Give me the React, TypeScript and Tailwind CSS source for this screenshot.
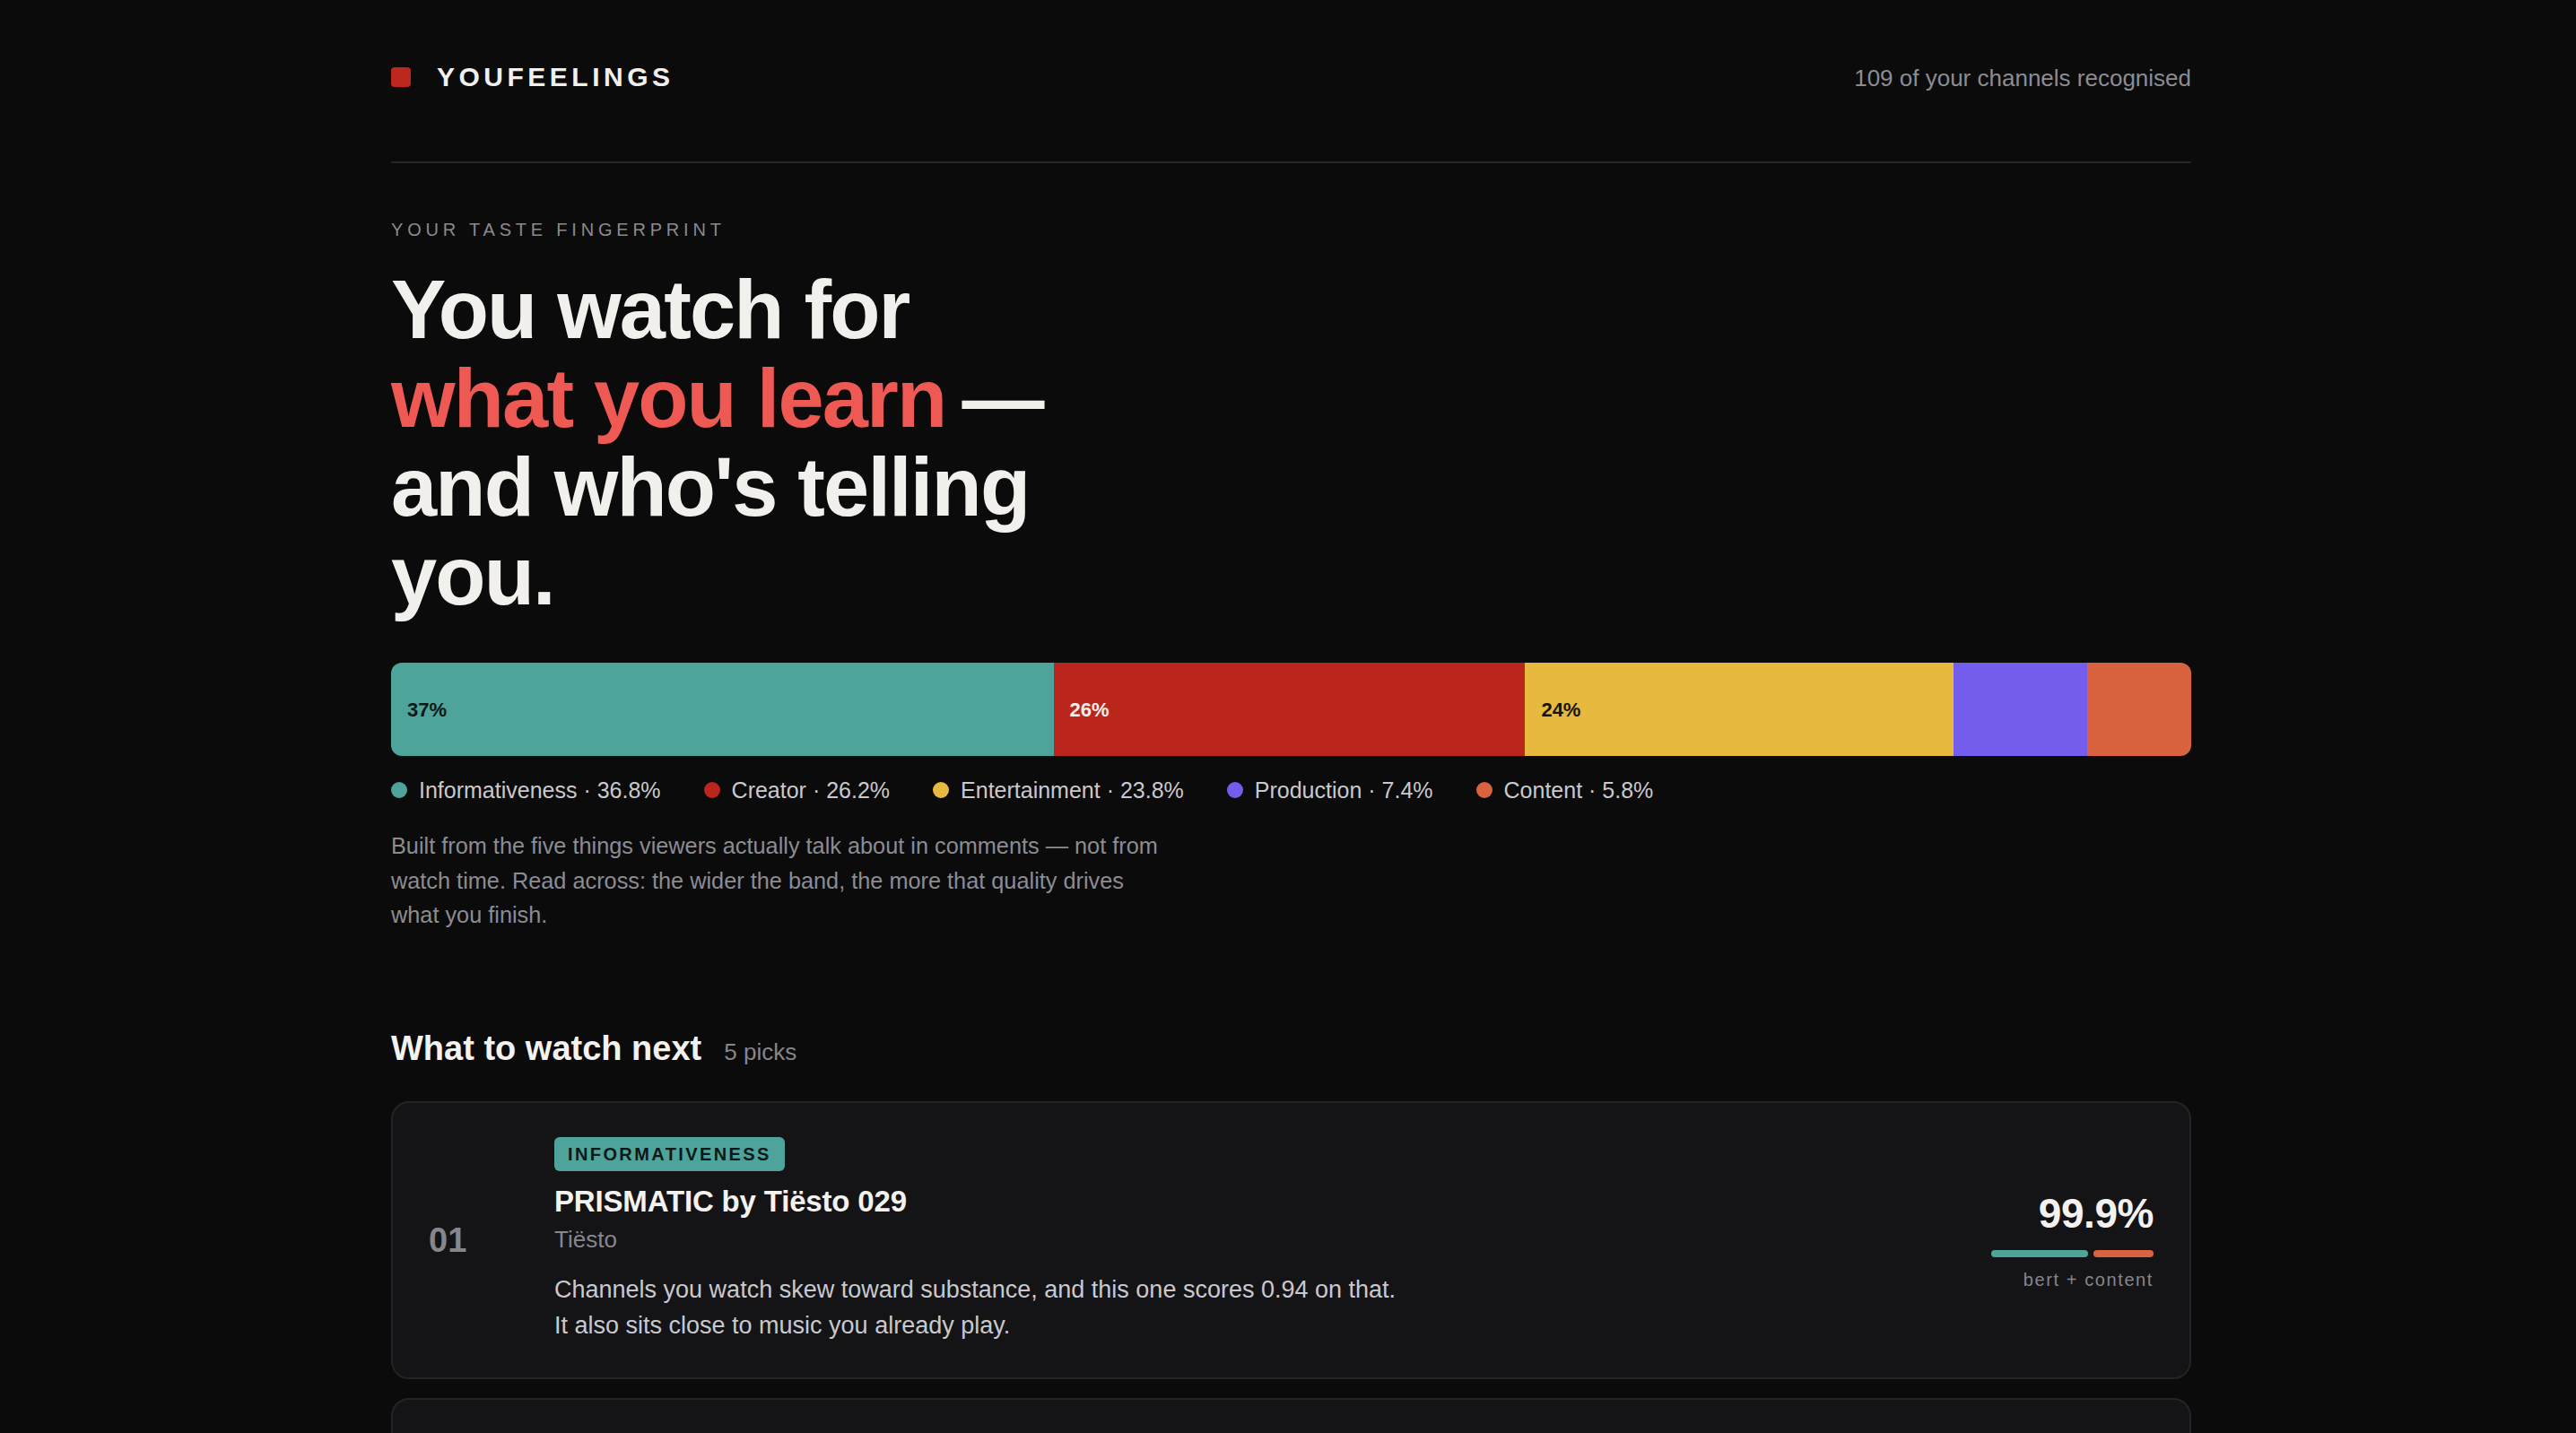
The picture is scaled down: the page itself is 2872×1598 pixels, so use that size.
import React from "react";

const segs = [
  { label: "37%", w: 36.8, bg: "bg-[#4ea39a]", fg: "text-[#0c1917]" },
  { label: "26%", w: 26.2, bg: "bg-[#bb261c]", fg: "text-[#f6efe9]" },
  { label: "24%", w: 23.8, bg: "bg-[#e8b93f]", fg: "text-[#1a1405]" },
  { label: "", w: 7.4, bg: "bg-[#745ded]", fg: "" },
  { label: "", w: 5.8, bg: "bg-[#d9633f]", fg: "" },
];

const legend = [
  { name: "Informativeness", v: "36.8%", dot: "bg-[#4ea39a]" },
  { name: "Creator", v: "26.2%", dot: "bg-[#bb261c]" },
  { name: "Entertainment", v: "23.8%", dot: "bg-[#e8b93f]" },
  { name: "Production", v: "7.4%", dot: "bg-[#745ded]" },
  { name: "Content", v: "5.8%", dot: "bg-[#d9633f]" },
];

type Pick = {
  n: string;
  tag: string;
  tagBg: string;
  title: string;
  artist: string;
  lines: string[];
  score: string;
  bars: { w: number; c: string }[];
  method: string;
};

const picks: Pick[] = [
  {
    n: "01",
    tag: "INFORMATIVENESS",
    tagBg: "bg-[#4ea39a]",
    title: "PRISMATIC by Tiësto 029",
    artist: "Tiësto",
    lines: [
      "Channels you watch skew toward substance, and this one scores 0.94 on that.",
      "It also sits close to music you already play.",
    ],
    score: "99.9%",
    bars: [
      { w: 108, c: "bg-[#4ea39a]" },
      { w: 67, c: "bg-[#d9633f]" },
    ],
    method: "bert + content",
  },
  {
    n: "02",
    tag: "CREATOR",
    tagBg: "bg-[#bb261c]",
    title: "Studio session, live from the booth",
    artist: "Tiësto",
    lines: [
      "You stay with creators who talk straight to camera, and this one scores 0.91 on that.",
      "It also sits close to music you already play.",
    ],
    score: "98.7%",
    bars: [
      { w: 108, c: "bg-[#bb261c]" },
      { w: 67, c: "bg-[#d9633f]" },
    ],
    method: "bert + content",
  },
];

function PickCard({ p }: { p: Pick }) {
  return (
    <div className="flex items-center rounded-[20px] border-2 border-[#242427] bg-[#141417] px-[40px] py-[38px]">
      <div className="w-[140px] shrink-0 text-[38px] font-bold leading-[48px] text-[#86868c]">
        {p.n}
      </div>
      <div className="flex min-w-0 flex-1 flex-col items-start">
        <span
          className={`${p.tagBg} rounded-[6px] px-[15px] text-[20px] font-bold leading-[38px] tracking-[0.12em] text-[#0c1917]`}
        >
          {p.tag}
        </span>
        <div className="mt-[14px] text-[33px] font-bold leading-[40px] tracking-[-0.005em] text-[#f4f2ee]">
          {p.title}
        </div>
        <div className="mt-[5px] text-[26px] leading-[34px] text-[#86868c]">{p.artist}</div>
        <div className="mt-[19px] text-[27px] leading-[40px] text-[#c9c9cd]">
          {p.lines.map((l, i) => (
            <div key={i} className="whitespace-nowrap">
              {l}
            </div>
          ))}
        </div>
      </div>
      <div className="flex shrink-0 flex-col items-end">
        <div className="text-[46px] font-bold leading-[52px] tracking-[-0.01em] text-[#f4f2ee]">
          {p.score}
        </div>
        <div className="mt-[15px] flex gap-[6px]">
          {p.bars.map((b, i) => (
            <div key={i} className={`${b.c} h-[8px] rounded-full`} style={{ width: b.w }} />
          ))}
        </div>
        <div className="mt-[13px] text-[20px] leading-[24px] tracking-[0.08em] text-[#86868c]">
          {p.method}
        </div>
      </div>
    </div>
  );
}

export default function App() {
  return (
    <div className="min-h-screen bg-[#0b0b0b] font-['Liberation_Sans',Arial,Helvetica,sans-serif] text-[#f4f2ee]">
      <div className="ml-[436px] w-[2007px] pb-[80px]">
        {/* header */}
        <header className="flex items-center justify-between border-b-2 border-[#262628] pt-[56px] pb-[64px]">
          <div className="flex h-[60px] items-center gap-[29px]">
            <div className="h-[22px] w-[22px] rounded-[4px] bg-[#bd281e]" />
            <span className="text-[30px] font-bold leading-[36px] tracking-[0.15em] text-[#f2f0ec]">
              YOUFEELINGS
            </span>
          </div>
          <div className="pt-[2px] text-[26px] leading-[36px] text-[#8c8c92]">
            109 of your channels recognised
          </div>
        </header>

        {/* fingerprint */}
        <section className="pt-[60px]">
          <div className="text-[20px] leading-[28px] tracking-[0.24em] text-[#8a8a90]">
            YOUR TASTE FINGERPRINT
          </div>
          <h1 className="mt-[26px] text-[92px] font-bold leading-[99px] tracking-[-0.02em] text-[#f2f0ec]">
            <span className="block whitespace-nowrap">You watch for</span>
            <span className="block whitespace-nowrap">
              <span className="text-[#ee5a53]">what you learn</span>
              <span className="ml-[18px]">—</span>
            </span>
            <span className="block whitespace-nowrap">and who's telling</span>
            <span className="block whitespace-nowrap">you.</span>
          </h1>

          <div className="mt-[47px] flex h-[104px] overflow-hidden rounded-[12px]">
            {segs.map((s, i) => (
              <div
                key={i}
                className={`${s.bg} ${s.fg} flex items-center pl-[18px] text-[22px] font-bold`}
                style={{ width: `${s.w}%` }}
              >
                {s.label}
              </div>
            ))}
          </div>

          <div className="mt-[21px] flex gap-[48px]">
            {legend.map((l) => (
              <div key={l.name} className="flex items-center gap-[13px]">
                <div className={`${l.dot} h-[18px] w-[18px] rounded-full`} />
                <span className="text-[25px] leading-[34px] text-[#c9c9cd]">
                  {l.name} · {l.v}
                </span>
              </div>
            ))}
          </div>

          <p className="mt-[26px] text-[25.3px] leading-[38.5px] text-[#8c8c92]">
            <span className="block whitespace-nowrap">
              Built from the five things viewers actually talk about in comments — not from
            </span>
            <span className="block whitespace-nowrap">
              watch time. Read across: the wider the band, the more that quality drives
            </span>
            <span className="block whitespace-nowrap">what you finish.</span>
          </p>
        </section>

        {/* picks */}
        <section className="mt-[105px]">
          <div className="flex items-baseline gap-[25px]">
            <h2 className="text-[38px] font-bold leading-[48px] text-[#f4f2ee]">
              What to watch next
            </h2>
            <span className="text-[26px] text-[#86868c]">5 picks</span>
          </div>
          <div className="mt-[35px] flex flex-col gap-[21px]">
            {picks.map((p) => (
              <PickCard key={p.n} p={p} />
            ))}
          </div>
        </section>
      </div>
    </div>
  );
}
